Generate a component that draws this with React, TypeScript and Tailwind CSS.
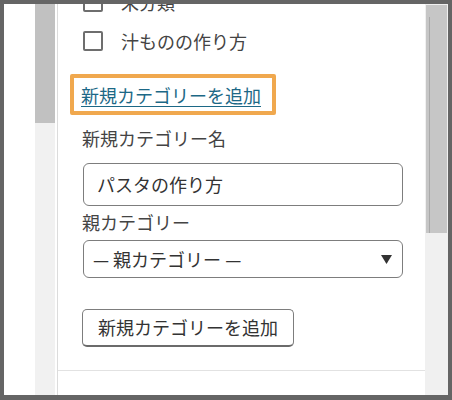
import React from "react";

const font = { fontFamily: '"Noto Sans CJK JP", "Noto Sans", sans-serif' };

const CheckRow: React.FC<{ label: string; className?: string }> = ({ label, className }) => (
  <div className={"flex items-center h-[20px] " + (className ?? "")}>
    <span className="ml-[25px] w-[20px] h-[20px] border-2 border-[#6e6e6e] rounded-[2px] bg-white shrink-0" />
    <span className="ml-[18px] text-[18px] leading-[20px] text-[#444]">{label}</span>
  </div>
);

export default function App() {
  return (
    <div
      className="w-[452px] h-[400px] bg-white border-[#656565] border-t-4 border-l-4 border-r-4 border-b-[5px] flex overflow-hidden"
      style={font}
    >
      {/* left blank + page scrollbar */}
      <div className="w-[31px] bg-white" />
      <div className="w-[20px] bg-[#f1f1f1] flex flex-col">
        <div className="h-[119px] bg-[#c1c1c1]" />
      </div>
      <div className="w-[2px] bg-white" />

      {/* meta box content */}
      <div className="w-[368px] border-l border-[#dcdcdc] bg-white flex flex-col">
        <CheckRow label="未分類" className="mt-[-12px]" />
        <CheckRow label="汁ものの作り方" className="mt-[19px]" />

        <div className="mt-[23px] ml-[12px] w-[206px] h-[41px] border-4 border-[#f0a84e] rounded-[2px] flex items-center pl-[7px]">
          <a className="text-[18px] leading-[20px] text-[#1c6886] underline underline-offset-[3px] whitespace-nowrap">
            新規カテゴリーを追加
          </a>
        </div>

        <div className="mt-[13px] ml-[24px] text-[18px] leading-[20px] text-[#444]">新規カテゴリー名</div>

        <div className="mt-[15px] ml-[25px] w-[320px] h-[43px] border border-[#7d7d7d] rounded-[6px] flex items-center pl-[13px] text-[18px] text-[#333]">
          パスタの作り方
        </div>

        <div className="mt-[6px] ml-[24px] text-[18px] leading-[20px] text-[#444]">親カテゴリー</div>

        <div className="mt-[8px] ml-[25px] w-[320px] h-[38px] border border-[#7d7d7d] rounded-[6px] flex items-center justify-between pl-[9px] pr-[10px] text-[18px] text-[#333]">
          <span>— 親カテゴリー —</span>
          <svg width="11" height="9" viewBox="0 0 11 9">
            <path d="M0 0 H11 L5.5 9 Z" fill="#333" />
          </svg>
        </div>

        <div className="mt-[31px] ml-[24px] w-[212px] h-[38px] border border-[#7d7d7d] border-b-2 border-b-[#6b6b6b] rounded-[5px] bg-white flex items-center justify-center text-[18px] text-[#333]">
          新規カテゴリーを追加
        </div>

        <div className="mt-[23px] border-t border-[#e2e2e2]" />
        <div className="flex-1 bg-white" />
      </div>

      {/* right scrollbar */}
      <div className="w-[23px] bg-[#f0f0f0] flex flex-col pt-[1px]">
        <div className="h-[228px] ml-[1px] w-[21px] bg-[#c6c6c6] flex">
          <div className="ml-[3px] mt-[12px] w-[1px] bg-[#a9a9a9]" />
        </div>
      </div>
    </div>
  );
}
